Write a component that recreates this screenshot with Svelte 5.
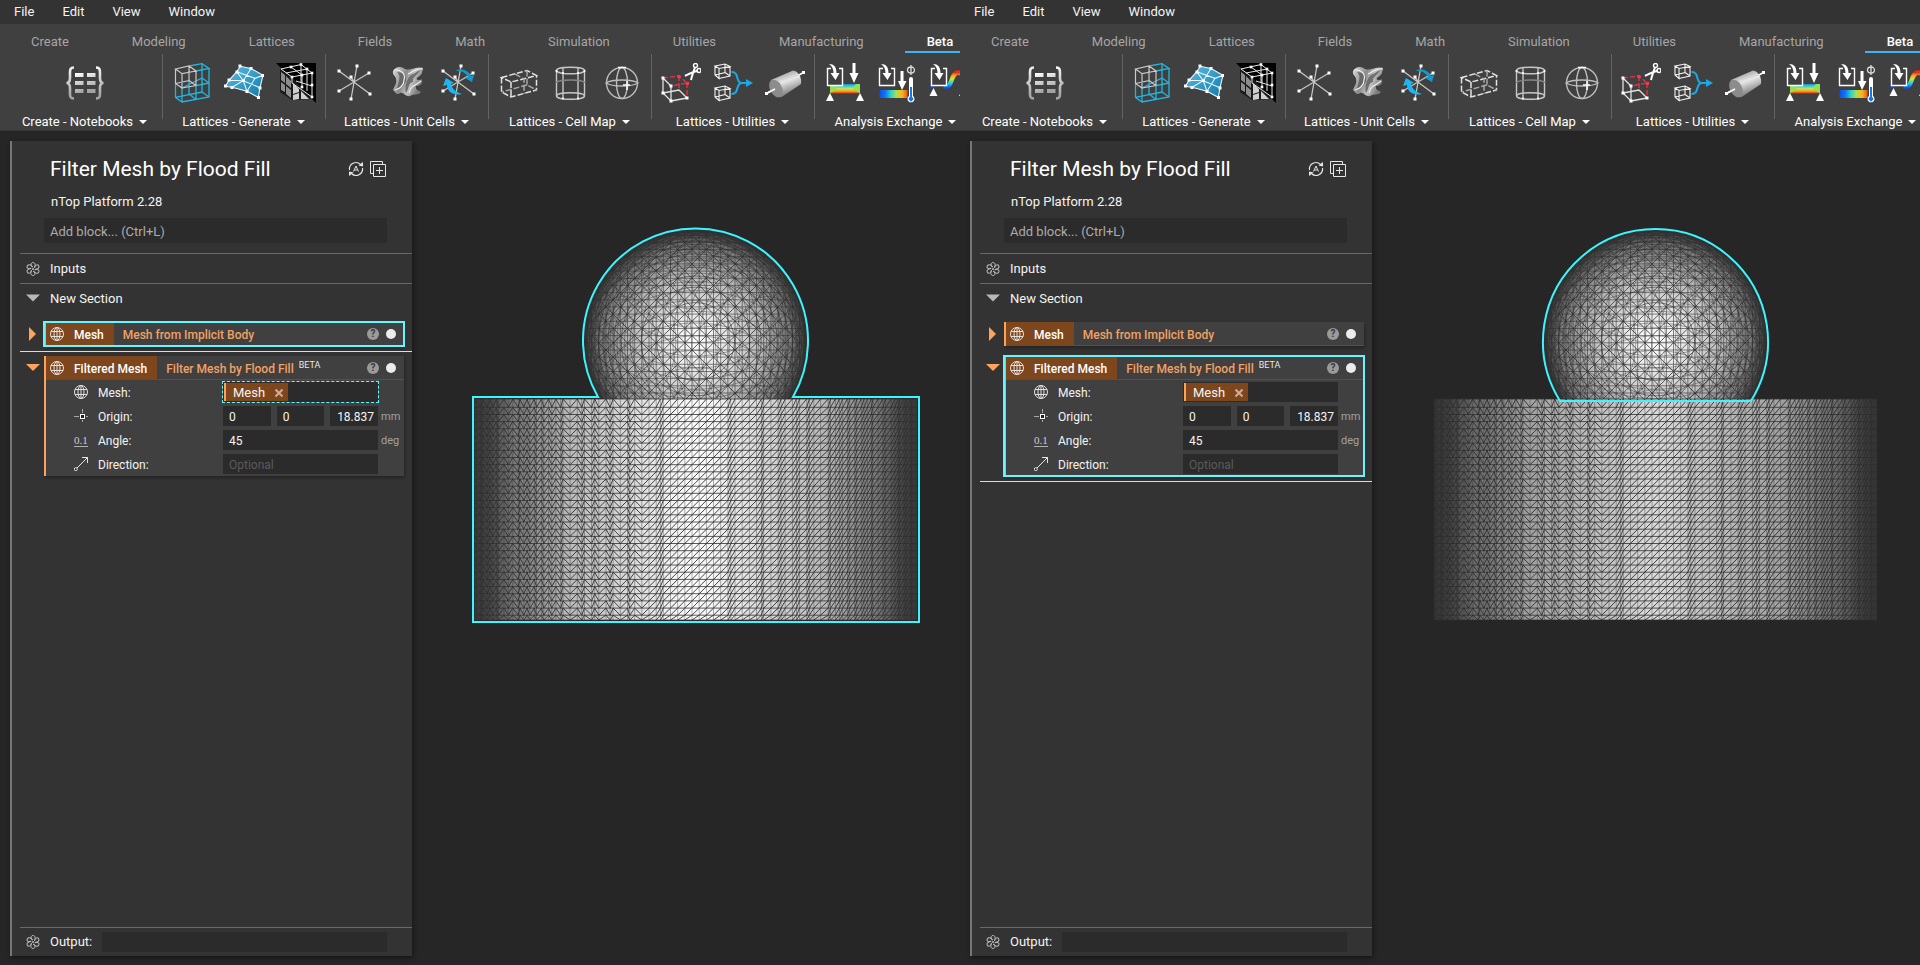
<script lang="ts">
  interface Pane {
    id: string;
    selected: 'mesh' | 'filtered';
  }

  const panes: Pane[] = [
    { id: 'before', selected: 'mesh' },
    { id: 'after', selected: 'filtered' },
  ];

  const menus = ['File', 'Edit', 'View', 'Window'];
  const tabs = ['Create', 'Modeling', 'Lattices', 'Fields', 'Math', 'Simulation', 'Utilities', 'Manufacturing', 'Beta'];
  const groups = [
    { label: 'Create - Notebooks', icons: ['notebook'] },
    { label: 'Lattices - Generate', icons: ['lattice', 'surface', 'voxel'] },
    { label: 'Lattices - Unit Cells', icons: ['star', 'gyroid', 'rotate'] },
    { label: 'Lattices - Cell Map', icons: ['box', 'cylinder', 'sphere'] },
    { label: 'Lattices - Utilities', icons: ['trim', 'merge', 'rod'] },
    { label: 'Analysis Exchange', icons: ['static', 'thermal', 'modal'] },
  ];

  // model geometry, in viewport units
  const CELL = 7.17;
  const CX = 223.6;
  const CY = 113.5;
  const BALL_R = 111;
  const BASE_R = 221.5;
  const TOP = 171;
  const BOTTOM = 392;

  type Vec = [number, number, number];

  // visible part of the circle where the plane n.p = d cuts the ball
  function ballCut(n: Vec, d: number): string {
    const r = Math.sqrt(BALL_R * BALL_R - d * d);
    const ref: Vec = Math.abs(n[2]) > 0.9 ? [1, 0, 0] : [0, 0, 1];
    let u = cross(n, ref);
    const len = Math.hypot(...u);
    u = [u[0] / len, u[1] / len, u[2] / len];
    const v = cross(n, u);
    let out = '';
    let pen = false;
    for (let i = 0; i <= 72; i++) {
      const a = (i / 72) * Math.PI * 2;
      const c = Math.cos(a) * r;
      const s = Math.sin(a) * r;
      const z = n[2] * d + u[2] * c + v[2] * s;
      if (z < -0.01) {
        pen = false;
        continue;
      }
      const x = CX + n[0] * d + u[0] * c + v[0] * s;
      const y = CY + n[1] * d + u[1] * c + v[1] * s;
      out += `${pen ? 'L' : 'M'}${x.toFixed(1)} ${y.toFixed(1)}`;
      pen = true;
    }
    return out;
  }

  function cross(a: Vec, b: Vec): Vec {
    return [a[1] * b[2] - a[2] * b[1], a[2] * b[0] - a[0] * b[2], a[0] * b[1] - a[1] * b[0]];
  }

  function ballFamily(n: Vec, offset: number, step = 1): string {
    const len = Math.hypot(...n);
    const unit: Vec = [n[0] / len, n[1] / len, n[2] / len];
    let out = '';
    for (let k = -40; k <= 40; k += step) {
      const d = ((k + offset) * CELL) / len;
      if (Math.abs(d) < BALL_R - 1) out += ballCut(unit, d);
    }
    return out;
  }

  function depth(x: number): number {
    return Math.sqrt(Math.max(0, BASE_R * BASE_R - x * x));
  }

  function baseLines() {
    const cuts: number[] = [];
    for (let k = -31; k <= 31; k++) {
      const x = (k + 0.5) * CELL;
      if (Math.abs(x) < BASE_R) cuts.push(x);
      if (k >= 0) {
        const across = depth(x);
        if (across > 0) cuts.push(across, -across);
      }
    }
    cuts.sort((a, b) => a - b);
    // slivers narrower than this only blur into a dark band
    const xs = cuts.filter((x, i) => i === 0 || x - cuts[i - 1] > 1.6);

    let columns = '';
    for (const x of xs) columns += `M${(CX + x).toFixed(1)} ${TOP}V${BOTTOM}`;
    const ys: number[] = [TOP];
    for (let y = 179.3; y < BOTTOM; y += CELL) ys.push(y);
    ys.push(BOTTOM);
    let rows = '';
    for (const y of ys) rows += `M${CX - BASE_R} ${y.toFixed(1)}H${CX + BASE_R}`;

    // rising diagonals at the front and right, zigzag on the left
    let diagonals = '';
    for (let i = 0; i < xs.length - 1; i++) {
      const falls = xs[i] < -50 && i % 2 === 0;
      const x0 = (CX + xs[i]).toFixed(1);
      const x1 = (CX + xs[i + 1]).toFixed(1);
      for (let j = 0; j < ys.length - 1; j++) {
        const a = ys[falls ? j : j + 1].toFixed(1);
        const b = ys[falls ? j + 1 : j].toFixed(1);
        diagonals += `M${x0} ${a}L${x1} ${b}`;
      }
    }
    return { columns, rows, diagonals };
  }

  const base = baseLines();
  const ballGrid = ballFamily([1, 0, 0], 0.5) + ballFamily([0, 1, 0], 0.18);
  const ballDepth = ballFamily([0, 0, 1], 0.5);
  const ballFacing = ballFamily([1, 1, 0], 0.68, 2) + ballFamily([1, -1, 0], 0.32, 2);
  const ballSlanted =
    ballFamily([0, 1, 1], 0.68, 2) +
    ballFamily([0, 1, -1], 0.68, 2) +
    ballFamily([1, 0, 1], 0, 2) +
    ballFamily([1, 0, -1], 0, 2);

  const starEnds = [[22, 3], [34, 10], [4, 8], [4, 28], [16, 36], [35, 31], [16, 14]];
  const cubeEnds = [[2, 15], [10, 23], [10, 38], [2, 30], [26, 35]];
</script>

{#snippet dots(points: number[][], size: number)}
  {#each points as [x, y]}
    <rect x={x - size / 2} y={y - size / 2} width={size} height={size} fill="#fff" />
  {/each}
{/snippet}

{#snippet star()}
  <path d="M22 3L16 36M34 10L4 28M4 8L35 31M20 20L16 14" fill="none" stroke="#c4c4c4" stroke-width="1.3" />
  {@render dots(starEnds, 3)}
{/snippet}

{#snippet importArrow()}
  <path d="M7 5.500H3.500V22.500H18.500V5.500H15" fill="none" stroke="#fff" stroke-width="1.4" />
  <path d="M5 1C10 1 12.500 4 12.500 10H15.500L11.500 17L6.500 10H9.500C9.500 6 8 3 5 1Z" fill="#fff" />
{/snippet}

{#snippet tinyCube(y: number)}
  <g transform="translate(2 {y})" fill="none" stroke="#f2f2f2" stroke-width="1.1">
    <path d="M0 3L4 5.500L15 3.500L10 1ZM0 3V12L4 15.500V5.500M4 15.500L15 13V3.500M10 1V9.500L0 12M10 9.500L15 13" />
  </g>
{/snippet}

{#snippet toolIcon(name: string, id: string)}
  <svg class="tool-icon" viewBox="0 0 40 40" aria-hidden="true">
    {#if name === 'notebook'}
      <g fill="none" stroke="url(#{id}-steel)" stroke-width="2.600">
        <path d="M9 4.500C5 4.500 5 7 5 10V15C5 18 4 20 1.500 20C4 20 5 22 5 25V30C5 33 5 35.500 9 35.500" />
        <path d="M31 4.500C35 4.500 35 7 35 10V15C35 18 36 20 38.500 20C36 20 35 22 35 25V30C35 33 35 35.500 31 35.500" />
      </g>
      <g fill="url(#{id}-steel)">
        <path d="M10 10h8.500v4H10ZM22 10h8.500v4H22ZM10 18h8.500v4H10ZM22 18h8.500v4H22ZM10 26h8.500v4H10ZM22 26h8.500v4H22Z" />
      </g>
    {:else if name === 'lattice'}
      <g fill="none" stroke="#27b4dc" stroke-width="1.300">
        <path d="M17 3L30 .7L37 5.500L24 8M37 5.500V34L10 39L3.500 34.300V21M37 20L24 22.500V36.500M10 25V39M17 31V17M30 .7V29L37 34M30 29L3.500 34.300M10 25L30 15L37 20M24 36.500L17 31" />
      </g>
      <path d="M3.500 6L17 3L24 8L10 10.700ZM3.500 6V20.500L10 25V10.700M10 25L24 22.500V8M3.500 20.500L17 17.500V3M17 17.500L24 22.500" fill="none" stroke="#c9c9c9" stroke-width="1.200" />
    {:else if name === 'surface'}
      <path d="M1.300 23.300L5 17.300L12.700 8.700L16.300 3.300L27 5.500L39 12.300L36 24.700L34.300 34.300L23 28.300L8 24.300Z" fill="url(#{id}-blue)" />
      <path d="M1.300 23.300L5 17.300L12.700 8.700L16.300 3.300L27 5.500L39 12.300L36 24.700L34.300 34.300L23 28.300L8 24.300ZM5 17.300L19.300 17.700L36 24.700M12.700 8.700L19.300 17.700L23 28.300M8 24.300L19.300 17.700L27 5.500M31 15.300L23 28.300M12.700 8.700L31 15.300L39 12.300" fill="none" stroke="#e9f6fb" stroke-width="1.100" />
      {@render dots([[1.5, 23], [5, 17], [13, 9], [16, 3], [27, 5.5], [38.5, 12.5], [36, 25], [34.5, 34.5], [23, 28.5], [8, 24.5], [19.5, 17.5]], 3)}
    {:else if name === 'voxel'}
      <path d="M0 0H40V40Z" fill="#000" />
      <path d="M4 6L16 14L36 36L16 37L4 29Z" fill="#1a1a1a" />
      <path d="M5 9L9 12V20L5 17ZM10 13L15 18V25L10 21ZM5 19L9 22V29L5 27ZM10 23L15 27V35L10 31Z" fill="#8d8d8d" />
      <path d="M17 20L23 26V29L17 31ZM17 32L23 30V36L17 37ZM25 28L33 36H25Z" fill="#cfcfcf" />
      <path d="M5 6L25 1.500L36 10L16 14ZM15 4L26 12V24M36 10V34M16 14V20L36 34M25 1.500V20M10 10L31 6V28M20 18L36 23" fill="none" stroke="#e5e5e5" stroke-width="1" />
      {@render dots([[25, 1.5], [15, 4], [31, 6], [36, 10], [26, 12], [16, 14], [36, 22], [36, 34], [26, 24]], 2.6)}
    {:else if name === 'star'}
      {@render star()}
    {:else if name === 'gyroid'}
      <path d="M6 8C9 3 14 3 18 6C23 8 30 3 36 5C35 9 36 11 31 14C27 17 33 18 35 16C36 20 34 23 29 23C28 27 31 27 34 29C31 33 27 30 23 33C18 34 17 29 13 30C10 33 8 29 6 27C8 22 10 20 9 16C9 13 5 12 6 8Z" fill="url(#{id}-shade)" />
      <path d="M10 9C15 13 11 20 10 26C15 26 17 22 19 18C20 13 16 9 10 9ZM24 12C28 10 30 9 33 7C30 13 25 14 26 19C21 20 22 26 19 30C17 25 20 15 24 12Z" fill="#5d5d5d" opacity=".8" />
      <path d="M7 7C14 6 19 11 17 17C17 22 13 26 8 27M36 6C29 5 25 9 21 11M34 18C28 23 24 22 22 30" fill="none" stroke="#ededed" stroke-width="1.200" />
    {:else if name === 'rotate'}
      {@render star()}
      <path d="M16 8C22 4 30 8 32 13L35 12L33 19L26 15L29 14C26 9 21 7 16 8Z" fill="#149ac9" />
      <path d="M23 31C15 33 8 29 8 22L4 23L7 15L15 20L12 21C13 26 17 29 23 31Z" fill="#20b5f2" />
    {:else if name === 'box'}
      <g fill="none" stroke="#e2e2e2" stroke-width="1.500" stroke-dasharray="6 2">
        <path d="M3.500 14.500L29 7.500L38.500 12.500L13 19ZM3.500 14.500V29L13 34L38.500 27V12.500M13 19V34" />
        <path d="M29 7.500V22L38.500 27M29 22L3.500 29M17 11L26 16V31" stroke="#a6a6a6" />
      </g>
    {:else if name === 'cylinder'}
      <g fill="none" stroke="#c6c6c6" stroke-width="1.400">
        <ellipse cx="20.500" cy="7.500" rx="14" ry="3.300" />
        <ellipse cx="20.500" cy="33" rx="14" ry="3.300" />
        <path d="M6.500 7.500V33M34.500 7.500V33M13 5V36M28 5V36" />
        <path d="M6.500 20C6.500 16 34.500 16 34.500 20" stroke="#858585" />
      </g>
      {@render dots([[6.5, 8], [13, 10], [28, 10], [34.5, 8], [13, 35.5], [28, 35.5]], 1.8)}
    {:else if name === 'sphere'}
      <g fill="none" stroke="#bdbdbd" stroke-width="1.400">
        <circle cx="20" cy="20" r="15.500" />
        <ellipse cx="20" cy="20" rx="5.500" ry="15.500" />
        <path d="M4 20C10 24 30 24 36 20C30 16 10 16 4 20Z" />
      </g>
      <path d="M21 22H28M25 18V27M16 4.500H24" stroke="#fff" stroke-width="1.500" />
    {:else if name === 'trim'}
      <path d="M2 15L10 23V38L2 30ZM10 38L26 35M2 30L18 27L26 35" fill="none" stroke="#e2e2e2" stroke-width="1.300" />
      <path d="M2 15L18 13L26 20L10 23M26 20V35M18 13V27" fill="none" stroke="#e03246" stroke-width="1.400" stroke-dasharray="5 2" />
      {@render dots(cubeEnds, 3)}
      <path d="M16.500 12h3v3h-3ZM25 19h3v3h-3Z" fill="#f23a50" />
      <path d="M24 13C28 11 33 8 37 8M30 17C31 12 33 8 34 4" fill="none" stroke="#fff" stroke-width="2" />
      <g fill="none" stroke="#fff" stroke-width="1.400"><circle cx="34.500" cy="2.500" r="2" /><circle cx="38" cy="7.500" r="2" /></g>
    {:else if name === 'merge'}
      {@render tinyCube(0)}
      {@render tinyCube(22)}
      <path d="M18.500 9C27 9 22 20 29 20H34M18.500 31C27 31 22 20 29 20" fill="none" stroke="#1aa9e6" stroke-width="2" />
      <path d="M33 16L40 20L33 24Z" fill="#1aa9e6" />
    {:else if name === 'rod'}
      <path d="M1.500 30.500L38.500 9.500" stroke="#fff" stroke-width="1.600" />
      <path d="M6 17L28 7.500C33 8 37 14 36 21L16 34.500Z" fill="url(#{id}-tube)" />
      <ellipse cx="11" cy="25.500" rx="6" ry="9.500" transform="rotate(-28 11 25.500)" fill="#8c8c8c" />
      <path d="M1.500 30.500L10 26" stroke="#fff" stroke-width="1.600" />
      {@render dots([[1.5, 30.5], [38.5, 9.5]], 3)}
    {:else if name === 'static'}
      <rect x="6" y="21" width="30" height="9.500" fill="url(#{id}-stress)" />
      <path d="M6 21H10C14 24 14 27 6 30ZM36 21H32C28 24 28 27 36 30Z" fill="#8fe05a" />
      <rect x="3.500" y="8" width="15" height="14.500" fill="#404040" />
      {@render importArrow()}
      <path d="M28.500 0H31.500V10H34.500L30 20L25.500 10H28.500ZM6 30L10 38H2ZM36 30L40 38H32Z" fill="#fff" />
    {:else if name === 'thermal'}
      <rect x="3.500" y="27" width="28" height="8" fill="url(#{id}-heat)" />
      {@render importArrow()}
      <path d="M24.500 8H27.500V18H30.500L26 27L22 18H24.500Z" fill="#fff" />
      <path d="M35 2V12M31.500 7a3.500 3 0 1 0 7 0a3.500 3 0 1 0-7 0" fill="none" stroke="#ddd" stroke-width="1.300" />
      <path d="M33 16a2 2 0 0 1 4 0V33a3.500 3.500 0 1 1-4 0Z" fill="#fff" />
      <path d="M34 24H36V34a2.200 2.200 0 1 1-2 0Z" fill="#1673e8" />
    {:else if name === 'modal'}
      <path d="M2 23.500H6" stroke="#0b50f0" stroke-width="2" />
      <path d="M16 23C25 27 22 10 30 9.500C37 9 36 23 40 25" fill="none" stroke="url(#{id}-wave)" stroke-width="4.500" />
      <rect x="3.500" y="8" width="15" height="14.500" fill="#404040" />
      {@render importArrow()}
      <path d="M5.500 25L9.500 33H1.500ZM35 25L39 33H31Z" fill="#fff" />
    {/if}
  </svg>
{/snippet}

{#snippet globe()}
  <svg class="glyph" viewBox="0 0 14 14" fill="none" stroke="#e4e0dc" stroke-width="1" aria-hidden="true">
    <circle cx="7" cy="7" r="6.500" />
    <ellipse cx="7" cy="7" rx="3" ry="6.500" />
    <path d="M7 .5V13.500M1 4.500H13M1 9.500H13" />
  </svg>
{/snippet}

{#snippet atom()}
  <svg class="glyph" viewBox="0 0 14 14" fill="none" stroke="#bcbcbc" stroke-width="1" aria-hidden="true">
    {#each [0, 60, 120, 180, 240, 300] as turn}
      <path d="M7 5C4.500 4 4.500 .5 7 .5C9.500 .5 9.500 3.500 8.500 5.500" transform="rotate({turn} 7 7)" />
    {/each}
    <circle cx="7" cy="7" r="1" fill="#bcbcbc" stroke="none" />
  </svg>
{/snippet}

{#snippet blockHeader(tag: string, title: string, beta: boolean)}
  <header class="block-header">
    <span class="tag">{@render globe()}<span class="tag-name">{tag}</span></span>
    <span class="block-title">{title}{#if beta}<sup>BETA</sup>{/if}</span>
    <button class="help" aria-label="Help for {title}">?</button>
    <span class="port"></span>
  </header>
{/snippet}

{#snippet model(pane: Pane)}
  <svg class="model" viewBox="0 0 448 395" role="img" aria-label="Mesh preview">
    <defs>
      <linearGradient id="{pane.id}-base" x1="0" x2="1" y1="0" y2="0">
        <stop offset="0" stop-color="#363636" />
        <stop offset=".03" stop-color="#454545" />
        <stop offset=".1" stop-color="#808080" />
        <stop offset=".22" stop-color="#bcbcbc" />
        <stop offset=".36" stop-color="#dcdcdc" />
        <stop offset=".5" stop-color="#fff" />
        <stop offset=".64" stop-color="#dcdcdc" />
        <stop offset=".78" stop-color="#bcbcbc" />
        <stop offset=".9" stop-color="#808080" />
        <stop offset=".97" stop-color="#454545" />
        <stop offset="1" stop-color="#363636" />
      </linearGradient>
      <radialGradient id="{pane.id}-ball">
        <stop offset="0" stop-color="#fff" />
        <stop offset=".3" stop-color="#e2e2e2" />
        <stop offset=".6" stop-color="#b8b8b8" />
        <stop offset=".85" stop-color="#7a7a7a" />
        <stop offset="1" stop-color="#383838" />
      </radialGradient>
      <clipPath id="{pane.id}-clip"><rect width="448" height={TOP} /></clipPath>
    </defs>
    <g clip-path="url(#{pane.id}-clip)">
      <circle cx={CX} cy={CY} r={BALL_R + 1} fill="url(#{pane.id}-ball)" />
      <g fill="none" stroke="#303030">
        <path d={ballGrid} stroke-width=".6" />
        <path d={ballDepth} stroke-width=".6" />
        <path d={ballFacing} stroke-width=".8" />
        <path d={ballSlanted} stroke-width=".4" />
      </g>
    </g>
    <g class:dimmed={pane.selected === 'filtered'}>
      <rect x={CX - BASE_R} y={TOP} width={BASE_R * 2} height={BOTTOM - TOP} fill="url(#{pane.id}-base)" />
      <g fill="none" stroke="#303030">
        <path d={base.columns} stroke-width=".4" />
        <path d={base.rows} stroke-width=".8" />
        <path d={base.diagonals} stroke-width=".9" />
      </g>
    </g>
    <g fill="none" stroke="#3df5ff" stroke-width="2">
      {#if pane.selected === 'mesh'}
        <path d="M1 169H126A112.500 112.500 0 1 1 321 169H447V394H1Z" />
      {:else}
        <path d="M128 173A112.500 112.500 0 1 1 319 173Z" />
      {/if}
    </g>
  </svg>
{/snippet}

<div class="comparison">
  {#each panes as pane (pane.id)}
    <section class="pane">
      <nav class="menu-bar">
        {#each menus as menu}
          <button>{menu}</button>
        {/each}
      </nav>

      <div class="ribbon">
        <svg class="paints" width="0" height="0" aria-hidden="true">
          <defs>
            <linearGradient id="{pane.id}-steel" x1="0" y1="0" x2=".3" y2="1">
              <stop offset="0" stop-color="#fff" /><stop offset="1" stop-color="#a2a2a2" />
            </linearGradient>
            <linearGradient id="{pane.id}-shade" x1="0" y1="0" x2="1" y2=".4">
              <stop offset="0" stop-color="#e0e0e0" /><stop offset=".45" stop-color="#8a8a8a" /><stop offset=".7" stop-color="#c4c4c4" /><stop offset="1" stop-color="#7a7a7a" />
            </linearGradient>
            <linearGradient id="{pane.id}-blue" x1="0" y1="0" x2="1" y2="1">
              <stop offset="0" stop-color="#58bfea" /><stop offset="1" stop-color="#127aa6" />
            </linearGradient>
            <linearGradient id="{pane.id}-tube" x1=".3" y1="0" x2=".7" y2="1">
              <stop offset="0" stop-color="#8a8a8a" /><stop offset=".4" stop-color="#e8e8e8" /><stop offset="1" stop-color="#5c5c5c" />
            </linearGradient>
            <linearGradient id="{pane.id}-stress" x1="0" y1="0" x2="0" y2="1">
              <stop offset="0" stop-color="#1c8fe0" /><stop offset=".25" stop-color="#3fd0d0" /><stop offset=".5" stop-color="#c9e84a" /><stop offset=".75" stop-color="#f5a51e" /><stop offset="1" stop-color="#ee2211" />
            </linearGradient>
            <linearGradient id="{pane.id}-heat">
              <stop offset="0" stop-color="#0b50f0" /><stop offset=".2" stop-color="#1273f0" /><stop offset=".4" stop-color="#2ad0d0" /><stop offset=".6" stop-color="#a8e050" /><stop offset=".8" stop-color="#fbb81c" /><stop offset="1" stop-color="#f2531a" />
            </linearGradient>
            <linearGradient id="{pane.id}-wave" x1="0" y1="1" x2="0" y2="0">
              <stop offset="0" stop-color="#0b50f0" /><stop offset=".3" stop-color="#25cfe0" /><stop offset=".6" stop-color="#c9e832" /><stop offset=".8" stop-color="#fba21c" /><stop offset="1" stop-color="#f02a1a" />
            </linearGradient>
          </defs>
        </svg>
        <nav class="tabs">
          {#each tabs as tab}
            <button class="tab" class:active={tab === 'Beta'}>{tab}</button>
          {/each}
        </nav>
        <div class="groups">
          {#each groups as group}
            <div class="group">
              <div class="tools">
                {#each group.icons as name}
                  <button aria-label={name}>{@render toolIcon(name, pane.id)}</button>
                {/each}
              </div>
              <button class="group-label">{group.label}<span class="caret"></span></button>
            </div>
          {/each}
        </div>
      </div>

      <main class="workspace">
        <div class="notebook">
          <div class="title-row">
            <h1>Filter Mesh by Flood Fill</h1>
            <button aria-label="Auto update">
              <svg width="16" height="16" viewBox="0 0 16 16" fill="none" stroke="#e6e6e6" stroke-width="1.200">
                <path d="M1.500 9A6.500 6.500 0 0 1 12.500 3.500M14.500 7A6.500 6.500 0 0 1 3.500 12.500" />
                <path d="M5.500 10.500L8 5L10.500 10.500M6.500 9H9.500" stroke-width="1" />
                <path d="M15 1V5.500L10.500 4.500ZM1 15V10.500L5.500 11.500Z" fill="#e6e6e6" stroke="none" />
              </svg>
            </button>
            <button aria-label="Duplicate notebook">
              <svg width="16" height="16" viewBox="0 0 16 16" fill="none" stroke="#e6e6e6" stroke-width="1">
                <path d="M3.500 3.500H15.500V15.500H3.500ZM12.500 3V.5H.5V12.500H3M9.500 6V13M6 9.500H13" />
              </svg>
            </button>
          </div>
          <p class="version">nTop Platform 2.28</p>
          <input class="add-block" type="text" placeholder="Add block... (Ctrl+L)" aria-label="Add block" />

          <div class="row ruled">{@render atom()}<span>Inputs</span></div>
          <div class="row ruled"><button class="fold open grey" aria-label="Toggle section"></button><span>New Section</span></div>

          <div class="blocks">
            <div class="block-row">
              <button class="fold" aria-label="Expand Mesh"></button>
              <article class="block" class:selected={pane.selected === 'mesh'}>
                {@render blockHeader('Mesh', 'Mesh from Implicit Body', false)}
              </article>
            </div>
            <div class="marker" class:shown={pane.selected === 'mesh'}></div>
            <div class="block-row">
              <button class="fold open" aria-label="Collapse Filtered Mesh"></button>
              <article class="block" class:selected={pane.selected === 'filtered'}>
                {@render blockHeader('Filtered Mesh', 'Filter Mesh by Flood Fill', true)}
                <div class="prop">
                  {@render globe()}
                  <span class="prop-label">Mesh:</span>
                  <div class="slot" class:linked={pane.selected === 'mesh'}>
                    <span class="chip">Mesh
                      <button aria-label="Remove Mesh">
                        <svg width="8" height="8" viewBox="0 0 8 8" stroke="#cfae98" stroke-width="2"><path d="M.5 .5L7.500 7.500M7.500 .5L.5 7.500" /></svg>
                      </button>
                    </span>
                  </div>
                </div>
                <div class="prop">
                  <svg class="glyph" viewBox="0 0 14 14" aria-hidden="true">
                    <path d="M0 7.500H5M12 7.500H14M8.500 0V4M8.500 11V13" stroke="#a8a8a8" />
                    <rect x="6.500" y="5.500" width="4" height="4" fill="#222" stroke="#fff" />
                  </svg>
                  <label class="prop-label" for="{pane.id}-origin-x">Origin:</label>
                  <div class="fields">
                    <input id="{pane.id}-origin-x" type="text" value="0" />
                    <input type="text" value="0" aria-label="Origin Y" />
                    <input class="long" type="text" value="18.837" aria-label="Origin Z" />
                  </div>
                  <span class="unit">mm</span>
                </div>
                <div class="prop">
                  <span class="number-glyph" aria-hidden="true">0.1</span>
                  <label class="prop-label" for="{pane.id}-angle">Angle:</label>
                  <div class="fields"><input id="{pane.id}-angle" type="text" value="45" /></div>
                  <span class="unit">deg</span>
                </div>
                <div class="prop">
                  <svg class="glyph" viewBox="0 0 14 14" fill="none" stroke="#e8e8e8" aria-hidden="true">
                    <path d="M3 11L13.500 .5M8 .5H13.500V6" />
                    <circle cx="1.800" cy="12.200" r="1.500" fill="#222" />
                  </svg>
                  <label class="prop-label" for="{pane.id}-direction">Direction:</label>
                  <div class="fields"><input id="{pane.id}-direction" type="text" placeholder="Optional" /></div>
                </div>
              </article>
            </div>
            <div class="marker" class:shown={pane.selected === 'filtered'}></div>
          </div>

          <div class="row ruled output">
            {@render atom()}
            <label for="{pane.id}-output">Output:</label>
            <input id="{pane.id}-output" type="text" />
          </div>
        </div>
        <div class="viewport">{@render model(pane)}</div>
      </main>
    </section>
  {/each}
</div>

<style>
  :global(body) {
    background: #262626;
  }

  .comparison {
    display: grid;
    grid-template-columns: 1fr 1fr;
    min-height: 100vh;
    font-family: Roboto, "Liberation Sans", sans-serif;
    font-size: 13px;
    line-height: 16px;
    color: #f4f4f4;
    background: #262626;
  }

  button,
  input {
    box-sizing: border-box;
    margin: 0;
    padding: 0;
    border: 0;
    background: none;
    color: inherit;
    font: inherit;
    min-width: 0;
  }

  .pane {
    display: flex;
    flex-direction: column;
    min-width: 0;
    overflow: hidden;
  }

  .menu-bar {
    display: flex;
    gap: 28px;
    height: 24px;
    padding-left: 14px;
    background: #333;
  }

  .ribbon {
    background: #404040;
    border-bottom: 1px solid #363636;
  }

  .paints {
    position: absolute;
  }

  .tabs {
    display: flex;
    gap: 19px;
    height: 29px;
    padding-left: 9px;
  }

  .tab {
    flex: none;
    padding: 9px 22px 0;
    border-bottom: 2px solid transparent;
    color: #a6a6a6;
  }

  .tab.active {
    color: #fff;
    font-weight: 500;
    border-color: #3db5f5;
  }

  .groups {
    display: flex;
    padding: 1px 0 0 4px;
  }

  .group {
    position: relative;
    flex: none;
    box-sizing: border-box;
    width: 163px;
    height: 76px;
    padding-top: 9px;
  }

  .group:first-child {
    width: 158px;
    padding-left: 3px;
  }

  .group + .group::before {
    content: '';
    position: absolute;
    left: 0;
    top: 0;
    width: 1px;
    height: 65px;
    background: #636363;
  }

  .tools {
    display: flex;
    justify-content: center;
    gap: 12px;
    margin-bottom: 11px;
  }

  .tools button,
  .tool-icon {
    display: block;
    width: 40px;
    height: 40px;
  }

  .group-label {
    display: flex;
    align-items: center;
    justify-content: center;
    gap: 6px;
    width: 100%;
    white-space: nowrap;
    color: #fff;
  }

  .caret {
    border: 4px solid transparent;
    border-top-color: #fff;
    border-bottom-width: 0;
  }

  .workspace {
    display: flex;
    flex: 1;
  }

  .notebook {
    display: flex;
    flex-direction: column;
    flex: 0 0 392px;
    margin: 10px 0 9px 10px;
    padding-left: 8px;
    border-left: 2px solid #777;
    background: #333;
    box-shadow: 1px 2px 5px rgba(0, 0, 0, 0.45);
  }

  .title-row {
    display: flex;
    align-items: center;
    gap: 6px;
    height: 28px;
    margin: 14px 26px 0 30px;
  }

  .title-row svg {
    display: block;
  }

  h1 {
    flex: 1;
    margin: 0;
    font-size: 21px;
    font-weight: 400;
    line-height: 28px;
    color: #fff;
  }

  .version {
    margin: 11px 0 8px 31px;
  }

  .add-block {
    height: 25px;
    margin: 0 25px 10px 24px;
    padding: 1px 0 0 6px;
    background: #2b2b2b;
  }

  .add-block::placeholder {
    color: #ababab;
    opacity: 1;
  }

  .row {
    display: flex;
    align-items: center;
    gap: 10px;
    height: 29px;
    padding-left: 6px;
  }

  .ruled {
    border-top: 1px solid #696969;
  }

  .glyph {
    flex: none;
    width: 14px;
    height: 14px;
  }

  .fold {
    flex: none;
    width: 14px;
    height: 14px;
    background: #ffa35c;
    clip-path: polygon(3px 0, 10px 7px, 3px 14px);
  }

  .fold.open {
    clip-path: polygon(0 3px, 14px 3px, 7px 10px);
  }

  .fold.grey {
    background: #b8b8b8;
  }

  .blocks {
    margin-top: 9px;
    font-size: 12px;
  }

  .block-row {
    display: flex;
    gap: 4px;
    padding: 0 8px 0 6px;
  }

  .block-row .fold {
    margin-top: 5px;
  }

  .block {
    flex: 1;
    border-left: 2px solid #ffa35c;
    background: #404040;
    box-shadow: 1px 2px 3px rgba(0, 0, 0, 0.3);
  }

  .block.selected {
    outline: 2px solid #62f6ff;
    outline-offset: -1px;
  }

  .marker {
    height: 1px;
    margin: 5px 0 4px;
  }

  .marker.shown {
    background: #dcdcdc;
  }

  .block-header {
    display: flex;
    align-items: center;
    box-sizing: border-box;
    height: 24px;
    padding-right: 8px;
    border-bottom: 1px solid #515151;
  }

  .tag {
    display: flex;
    align-items: center;
    gap: 10px;
    align-self: stretch;
    padding: 0 10px 0 4px;
    background: #7e461c;
    color: #fff;
    font-weight: 500;
  }

  .tag-name {
    padding-top: 2px;
  }

  .block-title {
    flex: 1;
    padding: 2px 0 0 9px;
    font-weight: 500;
    color: #f2a064;
    white-space: nowrap;
  }

  sup {
    margin-left: 5px;
    font-size: 9px;
    line-height: 9px;
    font-weight: 400;
    color: #e8e8e8;
  }

  .help {
    width: 12px;
    height: 12px;
    margin-right: 7px;
    border-radius: 50%;
    background: #9a9a9a;
    color: #383838;
    font-size: 10px;
    font-weight: 700;
    line-height: 12px;
  }

  .port {
    width: 10px;
    height: 10px;
    border-radius: 50%;
    background: #ececec;
  }

  .prop {
    display: flex;
    align-items: center;
    height: 24px;
    padding-left: 28px;
  }

  .prop-label {
    flex: none;
    width: 135px;
    padding: 1px 0 0 10px;
    box-sizing: border-box;
  }

  .slot,
  .fields {
    display: flex;
    flex: none;
    gap: 6px;
    width: 155px;
    height: 20px;
  }

  .slot {
    background: #2b2b2b;
  }

  .slot.linked {
    outline: 1px dashed #62f6ff;
  }

  .fields input {
    flex: 1;
    width: 0;
    padding: 1px 4px 0 6px;
    background: #2b2b2b;
  }

  .fields .long {
    text-align: right;
  }

  .fields input::placeholder {
    color: #5a5a5a;
    opacity: 1;
  }

  .chip {
    display: flex;
    align-items: center;
    gap: 10px;
    margin: 1px;
    padding: 1px 5px 0 7px;
    border-left: 2px solid #ffa35c;
    background: #7e461c;
    font-size: 13px;
  }

  .chip svg {
    display: block;
  }

  .unit {
    padding-top: 1px;
    margin-left: 3px;
    font-size: 11px;
    color: #a0a0a0;
  }

  .number-glyph {
    width: 14px;
    border-bottom: 1px solid #b0b0b0;
    font-family: "Liberation Serif", serif;
    font-size: 11px;
    line-height: 12px;
    color: #cfcfcf;
  }

  .output {
    margin-top: auto;
    height: 28px;
  }

  .output input {
    flex: 1;
    height: 20px;
    margin-right: 25px;
    background: #2b2b2b;
  }

  .viewport {
    display: flex;
    flex: 1;
    justify-content: center;
    align-items: flex-start;
    min-width: 0;
    padding: 97px 0 0 20px;
  }

  .model {
    flex: none;
    width: 448px;
    max-width: 100%;
    overflow: visible;
  }

  .dimmed {
    opacity: 0.83;
  }
</style>
